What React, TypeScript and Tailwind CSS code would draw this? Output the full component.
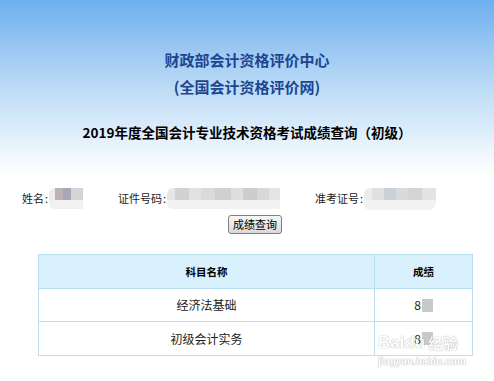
import React from "react";

const font = "font-['Microsoft_YaHei','Noto_Sans_CJK_SC','Noto_Sans',sans-serif]";

function NameBlur() {
    return (
        <div className="w-[34px] h-[21px] flex flex-col blur-[0.6px]">
            <div className="flex h-[12px]">
                <div className="w-[6px] bg-[#ececec] rounded-tl-[6px]" />
                <div className="w-[8px] bg-[#bdb2b6]" />
                <div className="w-[8px] bg-[#a9a6b6]" />
                <div className="w-[12px] bg-[#d5d5d8]" />
            </div>
            <div className="flex-1 bg-[#f1f1f2] rounded-bl-[6px]" />
        </div>
    );
}

function IdBlur() {
    return (
        <div className="w-[113px] h-[21px] flex flex-col blur-[0.6px]">
            <div className="flex h-[12px]">
                <div className="w-[8px] bg-[#e6e6e6] rounded-tl-[6px]" />
                <div className="w-[14px] bg-[#d2d2d4]" />
                <div className="w-[12px] bg-[#e2e2e2]" />
                <div className="w-[14px] bg-[#dadada]" />
                <div className="w-[16px] bg-[#d0d0d2]" />
                <div className="w-[12px] bg-[#dfdfdf]" />
                <div className="w-[14px] bg-[#cdcdd0]" />
                <div className="w-[12px] bg-[#d8d8d8]" />
                <div className="w-[11px] bg-[#e4e4e4]" />
            </div>
            <div className="flex-1 bg-[#f2f2f2] rounded-bl-[6px]" />
        </div>
    );
}

function ExamBlur() {
    return (
        <div className="w-[72px] h-[22px] flex flex-col blur-[0.6px]">
            <div className="flex h-[12px]">
                <div className="w-[8px] bg-[#ececec] rounded-tl-[6px]" />
                <div className="w-[12px] bg-[#e0e0e0]" />
                <div className="w-[12px] bg-[#c9d0d8]" />
                <div className="w-[12px] bg-[#dadada]" />
                <div className="w-[14px] bg-[#d2d4d8]" />
                <div className="w-[14px] bg-[#e3e3e3]" />
            </div>
            <div className="flex-1 bg-[#f2f2f2] rounded-bl-[6px] rounded-br-[8px]" />
        </div>
    );
}

function Score() {
    return (
        <span className="inline-flex items-center">
            <span>8</span>
            <span className="ml-[1px] inline-block w-[11px] h-[13px] bg-[#c9c9c9] blur-[0.4px]" />
        </span>
    );
}

export default function App() {
    return (
        <div className={`relative w-[494px] h-[381px] overflow-hidden bg-white text-[#222] ${font}`}>
            {/* Header */}
            <div className="bg-gradient-to-b from-[#6dafee] via-[#bcdbf6] to-white pt-[46px] pb-[33px] text-center">
                <div className="text-[15px] leading-[27px] font-bold text-[#1c4690]">财政部会计资格评价中心</div>
                <div className="text-[15px] leading-[27px] font-bold text-[#1c4690]">(全国会计资格评价网)</div>
                <div className="mt-[22px] text-[13.5px] leading-[20px] font-bold text-black">
                    2019年度全国会计专业技术资格考试成绩查询（初级）
                </div>
            </div>

            {/* Query form */}
            <div className="mt-[13px] flex items-center h-[21px] pl-[22px] text-[11px] text-[#222]">
                <div className="w-[96px] flex items-center">
                    <span className="whitespace-nowrap">姓名<span className="mx-[1px]">:</span></span>
                    <NameBlur />
                </div>
                <div className="w-[197px] flex items-center">
                    <span className="whitespace-nowrap">证件号码<span className="mx-[1px]">:</span></span>
                    <IdBlur />
                </div>
                <div className="flex items-center">
                    <span className="whitespace-nowrap">准考证号<span className="mx-[1px]">:</span></span>
                    <ExamBlur />
                </div>
            </div>

            <div className="mt-[6px] flex justify-center pl-[16px]">
                <button className="w-[54px] h-[19px] rounded-[3px] border border-[#7f7f7f] bg-gradient-to-b from-[#f7f7f7] to-[#d9d9d9] text-[11px] leading-[17px] text-black">
                    成绩查询
                </button>
            </div>

            {/* Result table */}
            <table className="mt-[20px] ml-[38px] w-[435px] border-collapse border border-[#b9e0f2] text-center">
                <thead>
                    <tr className="h-[34px] bg-[#d9f1fc]">
                        <th className="w-[336px] border border-[#b9e0f2] text-[10.5px] font-bold text-black">科目名称</th>
                        <th className="border border-[#b9e0f2] text-[10.5px] font-bold text-black">成绩</th>
                    </tr>
                </thead>
                <tbody className="text-[12px] text-[#222]">
                    <tr className="h-[33px]">
                        <td className="border border-[#b9e0f2]">经济法基础</td>
                        <td className="border border-[#b9e0f2]"><Score /></td>
                    </tr>
                    <tr className="h-[34px]">
                        <td className="border border-[#b9e0f2]">初级会计实务</td>
                        <td className="border border-[#b9e0f2]"><Score /></td>
                    </tr>
                </tbody>
            </table>

            {/* Baidu watermark */}
            <div className="absolute left-[378px] top-[334px] flex flex-col items-start leading-none text-white opacity-80 [text-shadow:0_0_1px_#9a9a9a,0_0_1px_#9a9a9a]">
                <div className="flex items-center text-[17px] font-bold font-['Liberation_Sans',sans-serif]">
                    <span>Bai</span>
                    <span className="relative">du</span>
                    <span className="ml-[3px] text-[15px] font-['Noto_Sans_CJK_SC',sans-serif]">经验</span>
                </div>
                <div className="mt-[6px] text-[10px] font-bold font-['Liberation_Sans',sans-serif]">jingyan.baidu.com</div>
            </div>
        </div>
    );
}
